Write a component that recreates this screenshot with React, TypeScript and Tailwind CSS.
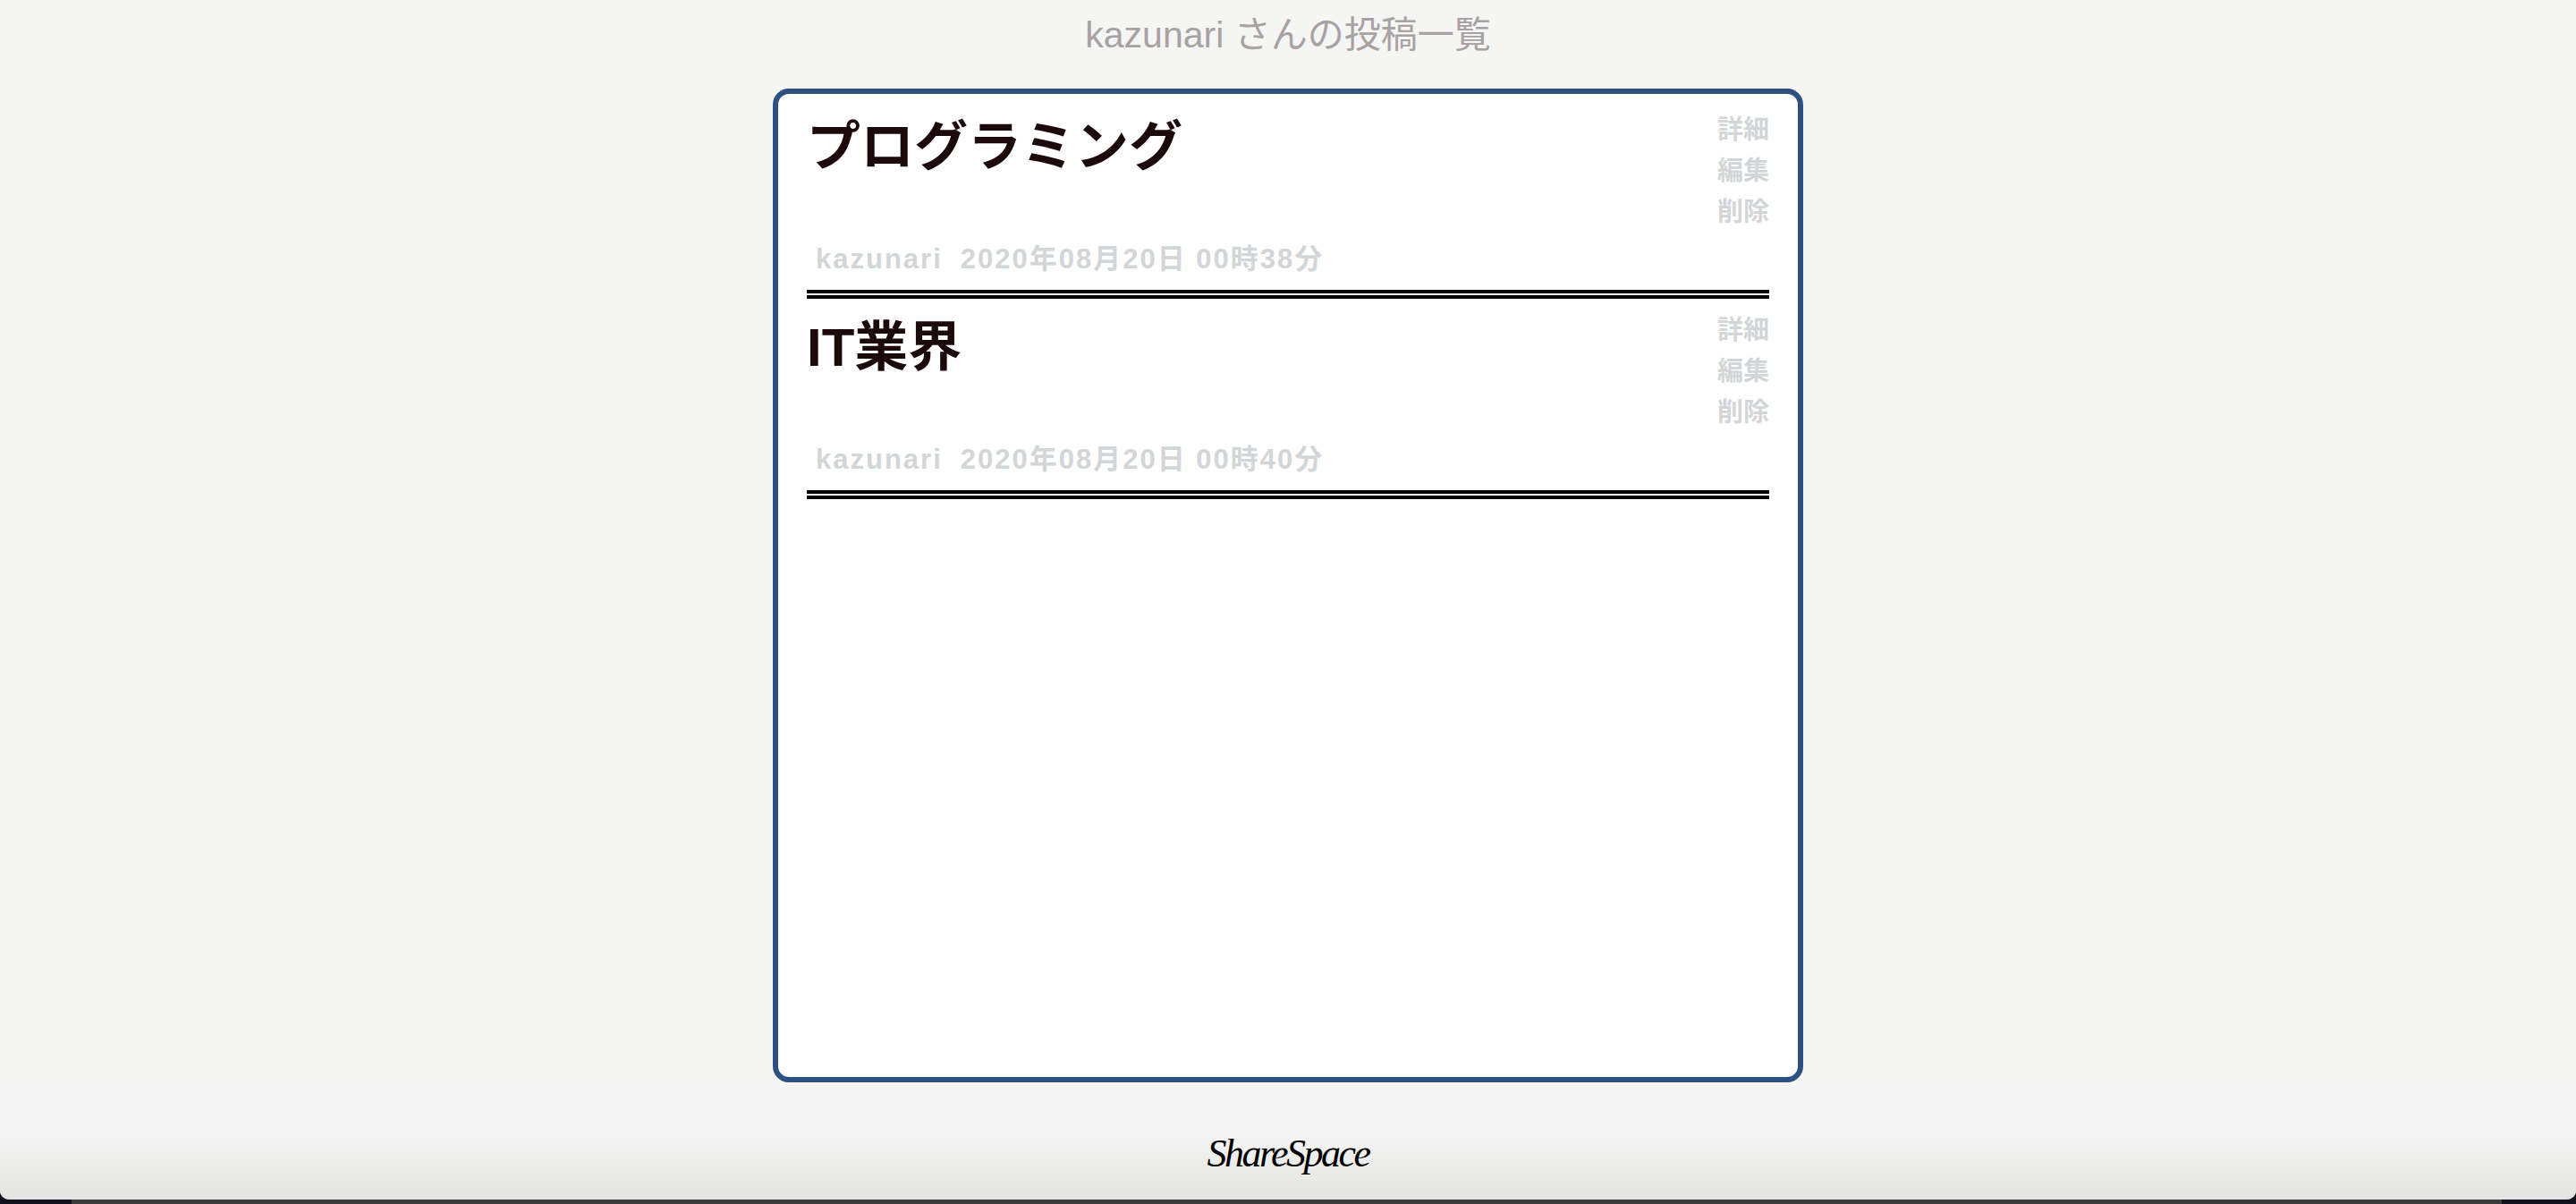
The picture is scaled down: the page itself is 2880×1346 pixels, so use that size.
import React from 'react';

interface Post {
  id: number;
  title: string;
  user: string;
  createdAt: string;
}

const posts: Post[] = [
  { id: 1, title: 'プログラミング', user: 'kazunari', createdAt: '2020年08月20日 00時38分' },
  { id: 2, title: 'IT業界', user: 'kazunari', createdAt: '2020年08月20日 00時40分' },
];

const jp = "font-['Liberation_Sans','Noto_Sans_CJK_JP',sans-serif]";

const PostItem = ({ post }: { post: Post }) => {
  return (
    <div className="pt-[8px]">
      <div className="flex items-start justify-between">
        <h2 className="text-[60px] leading-[94px] font-bold text-[#1c0a0a]">{post.title}</h2>
        <div className="flex flex-col items-end pt-[4px] text-[29px] leading-[46px] font-bold text-[#d2d6d8]">
          <a className="cursor-pointer">詳細</a>
          <a className="cursor-pointer">編集</a>
          <a className="cursor-pointer">削除</a>
        </div>
      </div>
      <div className="mt-[10px] mb-[14px] pl-[10px] text-[31px] leading-[40px] tracking-[2px] font-bold text-[#d2d6d8]">
        <span>{post.user}</span>
        <span className="ml-[20px]">{post.createdAt}</span>
      </div>
      {/* double rule under each post */}
      <div className="flex flex-col gap-[2px]">
        <div className="h-1 bg-black"></div>
        <div className="h-1 bg-black"></div>
      </div>
    </div>
  );
};

export default function App() {
  return (
    <div className={`min-h-screen flex flex-col bg-[#10121c] ${jp}`}>
      <div className="flex-1 flex flex-col bg-stone-100 rounded-b-[10px] overflow-hidden">
        {/* Header */}
        <div className="h-[99px] pt-[9px] text-center">
          <h1 className="text-[41px] leading-[60px] font-normal text-[#a8a2a2]">kazunari さんの投稿一覧</h1>
        </div>

        {/* Posts card */}
        <div className="w-[40%] h-[1111px] mx-auto bg-white border-[6px] border-[#2c5080] rounded-[18px] px-8 pt-[5px]">
          {posts.map((post) => (
            <PostItem key={post.id} post={post} />
          ))}
        </div>

        {/* Footer */}
        <div className="flex-1 flex items-start justify-center pt-[50px] bg-gradient-to-b from-stone-100 from-40% to-[#e4e4e3]">
          <span className="font-['Liberation_Serif',serif] italic text-[44px] leading-[60px] tracking-[-2.5px] text-black">
            ShareSpace
          </span>
        </div>
      </div>
      <div className="h-[5px] flex">
        <div className="w-[80px] bg-[#10121c]"></div>
        <div className="flex-1 bg-[#3c3c3c]"></div>
        <div className="w-[83px] bg-[#10121c]"></div>
      </div>
    </div>
  );
}
